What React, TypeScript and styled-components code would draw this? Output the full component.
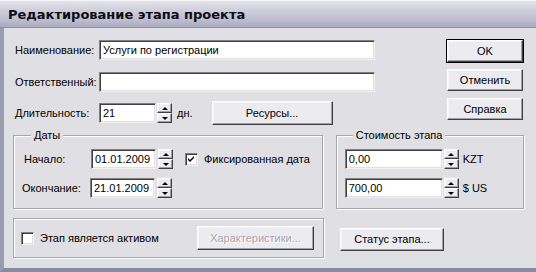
import styled, { createGlobalStyle } from 'styled-components';

const GlobalStyle = createGlobalStyle`
  html, body {
    margin: 0;
    padding: 0;
    background: #e0dfe3;
  }
  body {
    font-family: "Liberation Sans", Arial, sans-serif;
    font-size: 11px;
    color: #000;
  }
`;

const Window = styled.div`
  width: 536px;
  height: 272px;
  overflow: hidden;
  display: flex;
  flex-direction: column;
  background: #e0dfe3;
`;

const TitleBar = styled.div`
  flex: none;
  height: 28px;
  display: flex;
  align-items: center;
  padding-left: 8px;
  box-sizing: border-box;
  border-top: 1px solid #f6f6fa;
  border-bottom: 1px solid #8e8ea6;
  background: linear-gradient(#e2e2ea 0%, #cfcfdc 35%, #b9b9cc 80%, #a9a9c0 100%);
  font-family: "DejaVu Sans", Verdana, sans-serif;
  font-weight: bold;
  font-size: 13px;
  color: #0c0c14;
`;

const Body = styled.div`
  flex: 1;
  display: flex;
  flex-direction: column;
  border-left: 4px solid #9a9ab2;
  border-bottom: 4px solid #8a8aa2;
  padding: 11px 12px 0 9px;
`;

const TopSection = styled.div`
  display: flex;
  justify-content: space-between;
  align-items: flex-start;
  height: 85px;
`;

const Fields = styled.div`
  display: flex;
  flex-direction: column;
  padding-left: 2px;
`;

const Row = styled.div<{ $top?: number; $height?: number }>`
  display: flex;
  align-items: center;
  margin-top: ${(p) => p.$top ?? 0}px;
  height: ${(p) => p.$height ?? 20}px;
`;

const Label = styled.span<{ $width: number; $shift?: number }>`
  width: ${(p) => p.$width}px;
  margin-left: ${(p) => p.$shift ?? 0}px;
  flex: none;
  white-space: nowrap;
`;

const TextBox = styled.div<{ $width: number }>`
  width: ${(p) => p.$width}px;
  height: 20px;
  box-sizing: border-box;
  background: #fff;
  border: 1px solid;
  border-color: #808080 #f4f2e8 #f4f2e8 #808080;
  box-shadow: inset 1px 1px 0 #404040, inset -1px -1px 0 #e0dfe3;
  padding: 0 3px;
  display: flex;
  align-items: center;
  white-space: nowrap;
  overflow: hidden;
`;

const raised = `
  box-sizing: border-box;
  background: #ecebef;
  border: 1px solid;
  border-color: #fff #404040 #404040 #fff;
  box-shadow: inset -1px -1px 0 #a0a0a8, inset 1px 1px 0 #f4f4f6;
`;

const Button = styled.div<{ $width: number; $height?: number; $default?: boolean; $disabled?: boolean }>`
  ${raised}
  width: ${(p) => p.$width}px;
  height: ${(p) => p.$height ?? 22}px;
  display: flex;
  align-items: center;
  justify-content: center;
  flex: none;
  white-space: nowrap;
  color: ${(p) => (p.$disabled ? '#a7a6aa' : '#000')};
  text-shadow: ${(p) => (p.$disabled ? '1px 1px 0 #fff' : 'none')};
  outline: ${(p) => (p.$default ? '1px solid #000' : 'none')};
  outline-offset: 0;
`;

const SpinBox = styled.div<{ $gap?: number }>`
  display: flex;
  flex-direction: column;
  width: 15px;
  height: 20px;
  margin-left: ${(p) => p.$gap ?? 2}px;
  flex: none;
`;

const SpinHalf = styled.div`
  ${raised}
  flex: 1;
  display: flex;
  align-items: center;
  justify-content: center;
`;

const Arrow = styled.span<{ $down?: boolean }>`
  width: 0;
  height: 0;
  border-left: 3px solid transparent;
  border-right: 3px solid transparent;
  ${(p) => (p.$down ? 'border-top: 3px solid #000;' : 'border-bottom: 3px solid #000;')}
`;

const Unit = styled.span<{ $gap: number }>`
  margin-left: ${(p) => p.$gap}px;
  white-space: nowrap;
`;

const ButtonColumn = styled.div`
  display: flex;
  flex-direction: column;
  gap: 7px;
  margin-top: 1px;
  margin-right: 1px;
`;

const GroupsRow = styled.div`
  display: flex;
  margin-top: 5px;
`;

const Group = styled.fieldset<{ $width: number; $left?: number; $padLeft: number }>`
  margin: 0 0 0 ${(p) => p.$left ?? 0}px;
  width: ${(p) => p.$width}px;
  height: 80px;
  box-sizing: border-box;
  border: 1px solid #a7a6aa;
  box-shadow: inset 1px 1px 0 #fff, 1px 1px 0 #fff;
  padding: 7px 0 0 ${(p) => p.$padLeft}px;
  display: flex;
  flex-direction: column;
`;

const Legend = styled.legend`
  margin-left: 8px;
  padding: 0 3px;
  background: #e0dfe3;
  line-height: 13px;
  position: relative;
`;

const CheckBox = styled.span<{ $gap: number }>`
  width: 13px;
  height: 13px;
  box-sizing: border-box;
  margin-left: ${(p) => p.$gap}px;
  flex: none;
  background: #fff;
  border: 1px solid;
  border-color: #808080 #f4f2e8 #f4f2e8 #808080;
  box-shadow: inset 1px 1px 0 #404040, inset -1px -1px 0 #e0dfe3;
  display: flex;
  align-items: center;
  justify-content: center;
`;

const CheckText = styled.span`
  margin-left: 6px;
  white-space: nowrap;
`;

const BottomRow = styled.div`
  display: flex;
  align-items: center;
  margin-top: 9px;
`;

const Panel = styled.div`
  width: 311px;
  height: 40px;
  box-sizing: border-box;
  border: 1px solid #a7a6aa;
  box-shadow: inset 1px 1px 0 #fff, 1px 1px 0 #fff;
  display: flex;
  align-items: center;
  padding: 0 9px 0 7px;
  justify-content: space-between;
`;

const CheckGroup = styled.div`
  display: flex;
  align-items: center;
`;

const StatusButton = styled(Button)`
  margin-left: 16px;
  margin-top: 2px;
`;

const Spinner = ({ gap }: { gap?: number }) => (
  <SpinBox $gap={gap}>
    <SpinHalf>
      <Arrow />
    </SpinHalf>
    <SpinHalf>
      <Arrow $down />
    </SpinHalf>
  </SpinBox>
);

const Check = ({ checked, gap }: { checked?: boolean; gap: number }) => (
  <CheckBox $gap={gap}>
    {checked && (
      <svg width="7" height="7" viewBox="0 0 7 7">
        <path d="M0 2 L2 4 L6 0 L6 2 L2 6 L0 4 Z" fill="#000" />
      </svg>
    )}
  </CheckBox>
);

export default function App() {
  return (
    <>
      <GlobalStyle />
      <Window>
        <TitleBar>Редактирование этапа проекта</TitleBar>
        <Body>
          <TopSection>
            <Fields>
              <Row $top={1}>
                <Label $width={84}>Наименование:</Label>
                <TextBox $width={276}>Услуги по регистрации</TextBox>
              </Row>
              <Row $top={12}>
                <Label $width={84}>Ответственный:</Label>
                <TextBox $width={276} />
              </Row>
              <Row $top={9} $height={24}>
                <Label $width={84}>Длительность:</Label>
                <TextBox $width={57}>21</TextBox>
                <Spinner gap={1} />
                <Unit $gap={5}>дн.</Unit>
                <Button $width={121} $height={24} style={{ marginLeft: 19 }}>
                  Ресурсы...
                </Button>
              </Row>
            </Fields>
            <ButtonColumn>
              <Button $width={76} $default>
                OK
              </Button>
              <Button $width={76}>Отменить</Button>
              <Button $width={76}>Справка</Button>
            </ButtonColumn>
          </TopSection>

          <GroupsRow>
            <Group $width={311} $padLeft={9}>
              <Legend>Даты</Legend>
              <Row>
                <Label $width={67} $shift={1}>Начало:</Label>
                <TextBox $width={65}>01.01.2009</TextBox>
                <Spinner />
                <Check checked gap={12} />
                <CheckText>Фиксированная дата</CheckText>
              </Row>
              <Row $top={9}>
                <Label $width={68} $shift={-1}>Окончание:</Label>
                <TextBox $width={65}>21.01.2009</TextBox>
                <Spinner />
              </Row>
            </Group>
            <Group $width={189} $left={13} $padLeft={8}>
              <Legend>Стоимость этапа</Legend>
              <Row>
                <TextBox $width={98}>0,00</TextBox>
                <Spinner gap={1} />
                <Unit $gap={4}>KZT</Unit>
              </Row>
              <Row $top={9}>
                <TextBox $width={98}>700,00</TextBox>
                <Spinner gap={1} />
                <Unit $gap={4}>$ US</Unit>
              </Row>
            </Group>
          </GroupsRow>

          <BottomRow>
            <Panel>
              <CheckGroup>
                <Check gap={0} />
                <CheckText>Этап является активом</CheckText>
              </CheckGroup>
              <Button $width={117} $height={24} $disabled>
                Характеристики...
              </Button>
            </Panel>
            <StatusButton $width={104} $height={23}>
              Статус этапа...
            </StatusButton>
          </BottomRow>
        </Body>
      </Window>
    </>
  );
}
